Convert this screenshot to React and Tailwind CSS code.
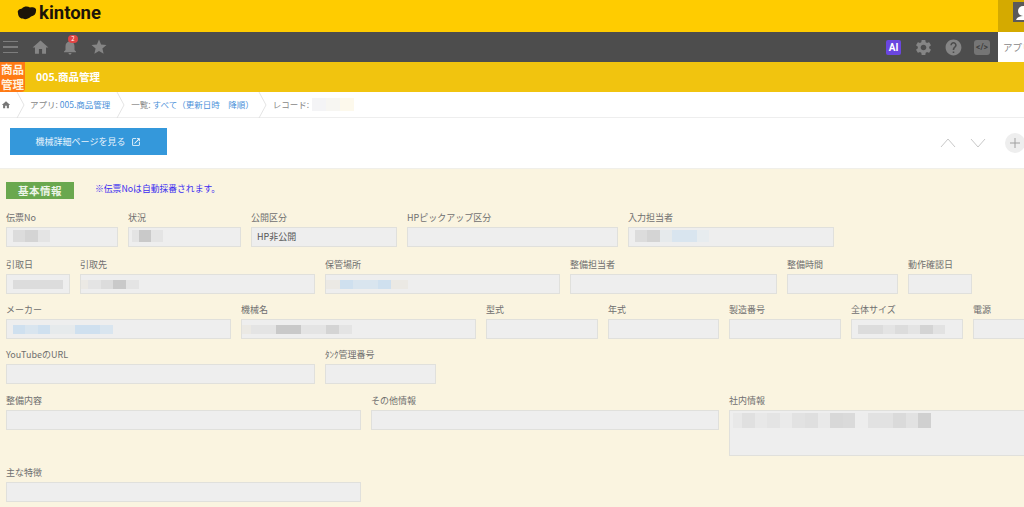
import React from "react";
import { MdHome, MdStar, MdNotifications, MdSettings, MdHelp, MdOpenInNew } from "react-icons/md";

const Blur = ({ blocks, ml = "ml-0", h = "h-[9px]" }) => (
  <div className={`flex ${h} ${ml}`}>
    {blocks.map((b, i) => (
      <div key={i} style={{ width: b[0], background: b[1] }} />
    ))}
  </div>
);

const Field = ({ w, label, value, blocks, h = "h-[20px]", ml = "ml-[6px]", bh = "h-[9px]", bt = "pt-[5px]" }) => (
  <div className={`flex flex-col shrink-0 ${w}`}>
    <div className="h-[10px] flex items-end text-[9px] leading-[9px] text-[#6f6f6f] whitespace-nowrap">{label}</div>
    <div className={`mt-[5px] box-border border border-[#e0e0dc] bg-[#eeeeee] overflow-hidden ${h}`}>
      {value && <div className="pl-[5px] pt-[3px] text-[9px] leading-[12px] text-[#555]">{value}</div>}
      {blocks && <div className={bt}><Blur blocks={blocks} ml={ml} h={bh} /></div>}
    </div>
  </div>
);

const Row = ({ children, className }) => <div className={`flex gap-[10px] ${className}`}>{children}</div>;

const Crumb = ({ className = "" }) => (
  <svg width="9" height="26" viewBox="0 0 9 26" className={`shrink-0 text-[#dddddd] ${className}`}>
    <path d="M1 0 L8 13 L1 26" fill="none" stroke="currentColor" strokeWidth="0.8" />
  </svg>
);

const g1 = "#dcdcdc", g2 = "#d4d4d4", g3 = "#e4e4e4", g4 = "#c9c9c9", b1 = "#cfe0ef", b2 = "#d9e5ef", b3 = "#e6eaec", c1 = "#ebe9e4";

export default function App() {
  return (
    <div className="w-[1024px] h-[507px] overflow-hidden flex flex-col bg-[#faf4e0] font-['Noto_Sans_CJK_JP','Noto_Sans',sans-serif]">
      {/* top */}
      <header className="h-[32px] shrink-0 bg-[#ffcc00] flex justify-between">
        <div className="flex items-center h-[25px] pl-[17px] gap-[2px]">
          <svg width="20" height="14" viewBox="0 0 20 14">
            <path d="M1 7 C0 4 3 3 5 2.5 C7 0 11 0 13 1.5 C16 0.5 20 2 19 5 C19 8 17 10 14 10.5 C11 13 8 14 6 12.5 C3 13 1 10 1 7 Z" fill="#1c1408" />
          </svg>
          <span className="text-[18.5px] leading-[20px] font-bold text-[#1c1408] font-['Roboto',sans-serif]">kintone</span>
        </div>
        <div className="w-[26px] h-[32px] bg-[#d4aa00] flex justify-end">
          <div className="w-[11px] h-[20px] mt-[2px] bg-[#5a5a5a] overflow-hidden">
            <svg width="11" height="20" viewBox="0 0 11 20">
              <circle cx="10" cy="9" r="5" fill="#fff" />
              <path d="M3 18 C4 15 7 14 10 14 L11 14 L11 18 Z" fill="#fff" />
            </svg>
          </div>
        </div>
      </header>

      {/* nav */}
      <nav className="h-[30px] shrink-0 bg-[#4d4d4d] flex justify-between">
        <div className="flex items-center pl-[3px]">
          <div className="w-[15px] flex flex-col gap-[4px]">
            <div className="h-[1.5px] bg-[#7d7d7d]" /><div className="h-[1.5px] bg-[#7d7d7d]" /><div className="h-[1.5px] bg-[#7d7d7d]" />
          </div>
          <MdHome className="ml-[13px] text-[#858585]" size={19} />
          <div className="relative ml-[11px]">
            <MdNotifications className="text-[#858585]" size={18} />
            <span className="absolute -top-[3px] left-[7px] w-[10px] h-[8px] rounded-full bg-[#e04545] text-white text-[6px] leading-[8px] text-center">2</span>
          </div>
          <MdStar className="ml-[11px] text-[#858585]" size={18} />
        </div>
        <div className="flex items-center">
          <div className="w-[15px] h-[15px] rounded-[2px] bg-[#6a46e0] text-white text-[10px] leading-[15px] font-bold text-center font-['Roboto',sans-serif]">AI</div>
          <MdSettings className="ml-[13px] text-[#858585]" size={19} />
          <MdHelp className="ml-[11px] text-[#858585]" size={19} />
          <div className="ml-[11px] w-[16px] h-[15px] rounded-[3px] bg-[#757575] text-[#3f3f3f] text-[8.5px] leading-[15px] font-bold text-center font-['Roboto',sans-serif]">&lt;/&gt;</div>
          <div className="ml-[8px] w-[26px] h-[30px] bg-white text-[#888] text-[9.5px] leading-[30px] pl-[5px] overflow-hidden whitespace-nowrap">アプリ</div>
        </div>
      </nav>

      {/* app title */}
      <div className="h-[30px] shrink-0 bg-[#f1c40f] flex items-center">
        <div className="w-[25px] h-[30px] bg-[#ff7a14] rounded-br-[4px] overflow-hidden flex flex-col items-center justify-center text-[#fff3e0] text-[11.5px] leading-[15px] font-bold whitespace-nowrap">
          <span>商品</span><span>管理</span>
        </div>
        <span className="ml-[11px] text-[10.5px] font-bold text-white">005.商品管理</span>
      </div>

      {/* breadcrumb */}
      <div className="h-[26px] shrink-0 box-border bg-white border-b border-[#eeeeee] flex items-center text-[8.5px] text-[#888] whitespace-nowrap">
        <MdHome className="ml-[1px] text-[#777]" size={10} />
        <Crumb className="ml-[5px]" />
        <span className="ml-[5px]">アプリ: <span className="text-[#4a90d9]">005.商品管理</span></span>
        <Crumb className="ml-[6px]" />
        <span className="ml-[6px]">一覧: <span className="text-[#4a90d9]">すべて（更新日時　降順）</span></span>
        <Crumb className="ml-[4px]" />
        <span className="ml-[6px]">レコード:</span>
        <Blur h="h-[13px]" ml="ml-[3px]" blocks={[[14, "#f4f4f6"], [14, "#f7f6f2"], [14, "#fdf9ec"]]} />
      </div>

      {/* toolbar */}
      <div className="h-[51px] shrink-0 bg-white flex justify-between pl-[10px] pt-[10px] border-b border-[#f0efe9]">
        <div className="w-[157px] h-[27px] bg-[#3498db] flex items-center justify-center gap-[6px] text-[9px] text-[#e8f3fb]">
          <span>機械詳細ページを見る</span>
          <MdOpenInNew size={10} className="text-white" />
        </div>
        <div className="flex items-start pt-[10px] -mr-[1px]">
          <svg width="16" height="10" viewBox="0 0 16 10"><path d="M1 9 L8 1 L15 9" fill="none" stroke="#c8c8c8" strokeWidth="1" /></svg>
          <svg width="16" height="10" viewBox="0 0 16 10" className="ml-[14px]"><path d="M1 1 L8 9 L15 1" fill="none" stroke="#c8c8c8" strokeWidth="1" /></svg>
          <div className="ml-[19px] -mt-[5px] w-[20px] h-[20px] rounded-full bg-[#eeeeee] flex items-center justify-center">
            <svg width="12" height="12" viewBox="0 0 12 12"><path d="M6 1 V11 M1 6 H11" stroke="#a0a0a0" strokeWidth="1" /></svg>
          </div>
        </div>
      </div>

      {/* form */}
      <main className="flex-1 pl-[6px] pt-[13px]">
        <div className="flex items-center h-[17px]">
          <div className="w-[68px] h-[17px] bg-[#6aa84f] text-center text-[#eef5ea] text-[10.5px] leading-[17px] font-bold tracking-[0.5px]">基本情報</div>
          <span className="ml-[21px] -mt-[3px] text-[8.8px] text-[#3a2df0]">※伝票Noは自動採番されます。</span>
        </div>

        <Row className="mt-[13px]">
          <Field w="w-[112px]" label="伝票No" bh="h-[12px]" bt="pt-[2px]" blocks={[[12, g1], [13, g2], [12, g3]]} />
          <Field w="w-[113px]" label="状況" bh="h-[12px]" bt="pt-[2px]" ml="ml-[3px]" blocks={[[7, g3], [12, g4], [12, g3]]} />
          <Field w="w-[146px]" label="公開区分" value="HP非公開" />
          <Field w="w-[211px]" label="HPピックアップ区分" />
          <Field w="w-[206px]" label="入力担当者" bh="h-[12px]" bt="pt-[2px]" blocks={[[12, g1], [13, g2], [12, b3], [12, b2], [13, b2], [12, "#e7ecef"]]} />
        </Row>
        <Row className="mt-[12px]">
          <Field w="w-[64px]" label="引取日" blocks={[[50, g1]]} />
          <Field w="w-[235px]" label="引取先" ml="ml-0" blocks={[[7, c1], [13, g3], [12, g1], [13, g4], [13, g3]]} />
          <Field w="w-[235px]" label="保管場所" ml="ml-0" blocks={[[14, c1], [13, b1], [13, b2], [12, b2], [13, b1], [17, c1]]} />
          <Field w="w-[207px]" label="整備担当者" />
          <Field w="w-[111px]" label="整備時間" />
          <Field w="w-[64px]" label="動作確認日" />
        </Row>
        <Row className="mt-[10px]">
          <Field w="w-[225px]" label="メーカー" blocks={[[12, b1], [13, b2], [12, b1], [13, b3], [12, b3], [13, b1], [12, b1], [13, b2]]} />
          <Field w="w-[235px]" label="機械名" ml="ml-0" blocks={[[9, c1], [13, g3], [12, g3], [13, g4], [12, g4], [13, g3], [12, g3], [13, g2], [13, g3]]} />
          <Field w="w-[112px]" label="型式" />
          <Field w="w-[111px]" label="年式" />
          <Field w="w-[112px]" label="製造番号" />
          <Field w="w-[112px]" label="全体サイズ" blocks={[[25, g1], [12, g3], [13, g1], [12, g3], [13, g2], [12, "#e2e2e2"]]} />
          <Field w="w-[111px]" label="電源" />
        </Row>
        <Row className="mt-[10px]">
          <Field w="w-[309px]" label="YouTubeのURL" />
          <Field w="w-[111px]" label="ﾀﾝｸ管理番号" />
        </Row>
        <Row className="mt-[11px] items-start">
          <Field w="w-[355px]" label="整備内容" />
          <Field w="w-[348px]" label="その他情報" />
          <Field w="w-[355px]" label="社内情報" h="h-[46px]" ml="ml-[3px]" bh="h-[15px]" bt="pt-[2px]" blocks={[[9, "#e8e8e8"], [13, "#e0e0e0"], [12, "#e8e8e8"], [13, "#e4e4e4"], [12, "#eaeaea"], [13, "#e2e2e2"], [13, "#dfdfdf"], [12, "#e9e9e9"], [13, "#d8d8d8"], [12, "#dadada"], [13, "#ededed"], [13, "#e2e2e2"], [12, "#e2e2e2"], [13, "#dadada"], [12, "#e2e2e2"], [13, "#d0d0d0"]]} />
        </Row>
        <Row className="mt-[11px]">
          <Field w="w-[355px]" label="主な特徴" />
        </Row>
      </main>
    </div>
  );
}
